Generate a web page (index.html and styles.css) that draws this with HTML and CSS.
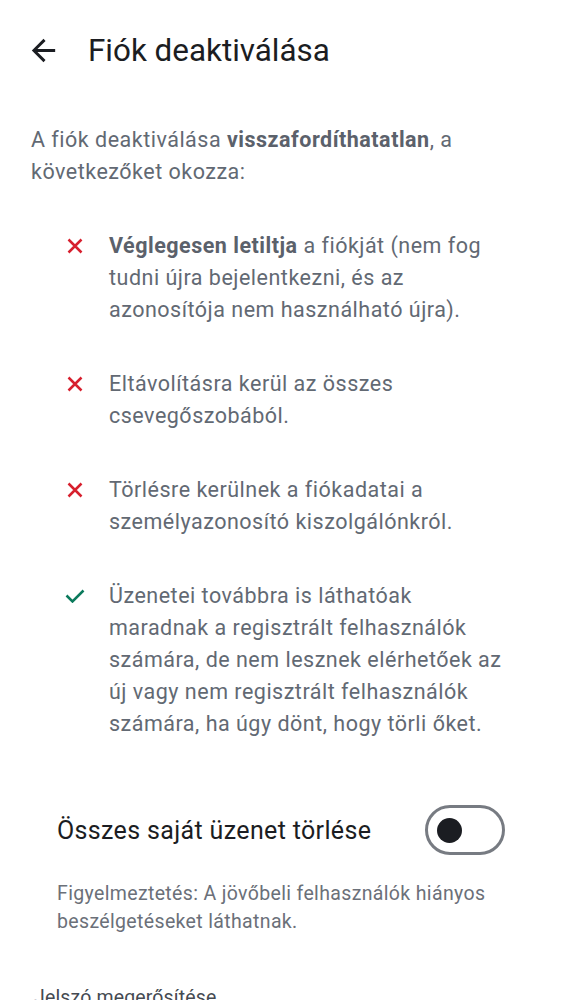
FILE: index.html
```html
<!DOCTYPE html>
<html lang="hu">
<head>
<meta charset="utf-8">
<link rel="stylesheet" href="styles.css">
</head>
<body>
<header class="topbar">
  <svg class="back" viewBox="0 0 24 24" aria-hidden="true"><path d="M20 11H7.83l5.59-5.59L12 4l-8 8 8 8 1.41-1.41L7.83 13H20v-2z"/></svg>
  <h1 class="title">Fiók deaktiválása</h1>
</header>
<main class="content">
  <p class="intro">A fiók deaktiválása <b>visszafordíthatatlan</b>, a következőket okozza:</p>
  <ul class="list">
    <li class="item">
      <svg class="icon bad" viewBox="0 0 16 16"><path d="M1.5 1.5l13 13M14.5 1.5l-13 13"/></svg>
      <span class="text"><b>Véglegesen letiltja</b> a fiókját (nem fog tudni újra bejelentkezni, és az azonosítója nem használható újra).</span>
    </li>
    <li class="item">
      <svg class="icon bad" viewBox="0 0 16 16"><path d="M1.5 1.5l13 13M14.5 1.5l-13 13"/></svg>
      <span class="text">Eltávolításra kerül az összes csevegőszobából.</span>
    </li>
    <li class="item">
      <svg class="icon bad" viewBox="0 0 16 16"><path d="M1.5 1.5l13 13M14.5 1.5l-13 13"/></svg>
      <span class="text">Törlésre kerülnek a fiókadatai a személyazonosító kiszolgálónkról.</span>
    </li>
    <li class="item">
      <svg class="icon good" viewBox="0 0 20 14"><path d="M1.5 6.5l6 6L18.5 1.5"/></svg>
      <span class="text">Üzenetei továbbra is láthatóak maradnak a regisztrált felhasználók számára, de nem lesznek elérhetőek az új vagy nem regisztrált felhasználók számára, ha úgy dönt, hogy törli őket.</span>
    </li>
  </ul>
  <div class="toggle-row">
    <span class="toggle-label">Összes saját üzenet törlése</span>
    <span class="switch"><span class="thumb"></span></span>
  </div>
  <p class="warning">Figyelmeztetés: A jövőbeli felhasználók hiányos beszélgetéseket láthatnak.</p>
  <p class="field-label">Jelszó megerősítése</p>
</main>
</body>
</html>
```

FILE: styles.css
```css
* { box-sizing: border-box; }
html, body { margin: 0; padding: 0; background: #ffffff; }
body {
  font-family: Roboto, "Liberation Sans", sans-serif;
  color: #1b1d22;
  width: 562px;
  height: 1000px;
  overflow: hidden;
}
.topbar {
  height: 100px;
  display: flex;
  align-items: center;
  padding-left: 26px;
}
.back {
  width: 35px;
  height: 35px;
  fill: #1b1d22;
  flex: none;
}
.title {
  margin: 0 0 0 27px;
  font-size: 31.4px;
  font-weight: 400;
  color: #1b1d22;
  letter-spacing: 0;
}
.content { padding: 0; }
.intro {
  margin: 24px 0 0 0;
  padding: 0 40px 0 31px;
  font-size: 21.5px;
  letter-spacing: 0.5px;
  line-height: 32px;
  color: #626973;
}
.intro b, .text b { font-weight: 700; color: #5b616b; }
.list {
  list-style: none;
  margin: 42px 0 0 0;
  padding: 0 47px 0 0;
  display: flex;
  flex-direction: column;
  gap: 42px;
}
.item {
  display: flex;
  align-items: flex-start;
}
.icon {
  flex: none;
  fill: none;
  stroke-width: 2.5;
  margin-top: 8px;
}
.icon.bad {
  width: 16px;
  height: 16px;
  margin-left: 67px;
  margin-right: 26px;
  stroke: #d7202e;
}
.icon.good {
  width: 20px;
  height: 14px;
  margin-left: 65px;
  margin-top: 9px;
  margin-right: 24px;
  stroke: #0b7a5c;
}
.text {
  font-size: 21.5px;
  letter-spacing: 0.5px;
  line-height: 32px;
  color: #626973;
}
.toggle-row {
  margin-top: 65px;
  display: flex;
  align-items: center;
  justify-content: space-between;
  padding: 0 57px 0 57px;
  height: 50px;
}
.toggle-label {
  font-size: 25px;
  letter-spacing: 0.35px;
  color: #1b1d22;
}
.switch {
  width: 80px;
  height: 50px;
  border: 3px solid #777b82;
  border-radius: 25px;
  display: flex;
  align-items: center;
  padding-left: 9px;
}
.thumb {
  width: 25px;
  height: 25px;
  border-radius: 50%;
  background: #1b1d22;
}
.warning {
  margin: 25px 0 0 0;
  padding: 0 40px 0 57px;
  font-size: 19.5px;
  line-height: 28px;
  color: #6b7079;
  letter-spacing: 0.35px;
}
.field-label {
  margin: 50px 0 0 0;
  padding-left: 34px;
  font-size: 19.5px;
  letter-spacing: 0.15px;
  line-height: 24px;
  color: #454a52;
}
```
